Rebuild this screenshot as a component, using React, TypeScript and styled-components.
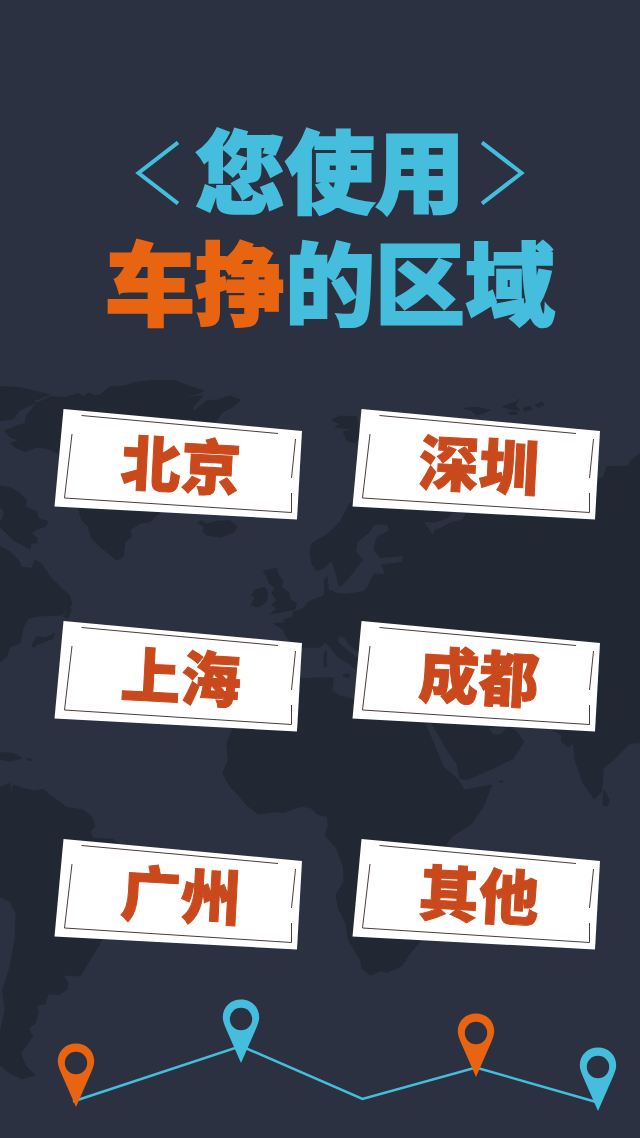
import React from 'react';
import styled, { createGlobalStyle } from 'styled-components';

const colors = {
  sea: '#2c3141',
  land: '#222833',
  sky: '#45bedd',
  orange: '#e96411',
  rust: '#ca491c',
};

const GlobalStyle = createGlobalStyle`
  *, *::before, *::after { box-sizing: border-box; }
  body {
    margin: 0;
    background: ${colors.sea};
    font-family: "Noto Sans CJK SC", "Noto Sans", sans-serif;
  }
`;

const Page = styled.main`
  position: relative;
  display: flex;
  flex-direction: column;
  min-height: 100vh;
  padding-top: 111px;
  overflow: hidden;
`;

const MapBackdrop = styled.svg`
  position: absolute;
  inset: 0;
  z-index: -1;
  width: 100%;
  height: auto;
`;

const Title = styled.h1`
  display: flex;
  flex-direction: column;
  margin: 0;
  padding-left: 20px;
  font-size: 90px;
  font-weight: 900;
  line-height: 112px;
  color: ${colors.sky};
`;

const TitleLine = styled.span`
  display: flex;
  justify-content: center;
  align-items: center;
  white-space: nowrap;
`;

const Words = styled.span<{ $accent?: boolean }>`
  display: block;
  color: ${({ $accent }) => ($accent ? colors.orange : colors.sky)};
  -webkit-text-stroke: 2px currentColor;
`;

const Chevron = styled.svg`
  width: 44px;
  height: 64px;
  margin: 12px 16px 0;
  fill: none;
  stroke: ${colors.sky};
  stroke-width: 4;
`;

const CityGrid = styled.nav`
  display: grid;
  grid-template-columns: 1fr 1fr;
  grid-template-rows: 212px 218px auto;
  column-gap: 50px;
  align-items: start;
  padding: 0 40px 0 54px;
  margin-top: 73px;
`;

const CityButton = styled.button`
  position: relative;
  display: flex;
  justify-content: center;
  align-items: center;
  height: 112px;
  padding: 0 0 4px 6px;
  border: 0;
  background: none;
  color: ${colors.rust};
  font-family: inherit;
  font-size: 60px;
  font-weight: 900;
  line-height: 64px;
  cursor: pointer;
`;

const Paper = styled.svg`
  position: absolute;
  inset: 0;
  width: 100%;
  height: 100%;
`;

const CityName = styled.span`
  position: relative;
  transform: rotate(3deg);
  -webkit-text-stroke: 1px currentColor;
`;

const Route = styled.svg`
  display: block;
  width: 100%;
  height: auto;
  margin-top: 40px;
`;

const cities = ['北京', '深圳', '上海', '成都', '广州', '其他'];

const pins = [
  { x: 76, y: 73, color: colors.orange },
  { x: 241, y: 29, color: colors.sky },
  { x: 476, y: 43, color: colors.orange },
  { x: 598, y: 77, color: colors.sky },
];

const landPaths = [
  // Arctic islands and Greenland
  'M0 80L60 82 100 92 148 104 120 116 96 122 110 128 60 150 40 176 0 182Z',
  'M80 165L110 130 150 110 200 112 235 100 250 111 265 98 285 108 300 104 330 80 375 78 400 68 450 62 525 62 550 72 575 80 612 93 585 104 555 109 500 110 560 112 608 108 575 145 585 152 620 122 650 120 690 108 722 120 700 140 665 158 655 175 630 200 500 400 480 458 450 485 420 490 390 510 395 530 375 545 370 590 350 600 325 580 300 560 275 535 265 500 245 480 235 445 175 280 140 265 110 262 75 275 45 262 32 250 60 240 30 232 14 212 50 198 75 190Z',
  // Iceland
  'M592 487L605 482 620 492 650 484 690 482 712 502 700 518 660 532 620 525 608 514 614 502Z',
  // North-east Canada
  'M0 378L30 382 60 400 80 420 75 440 110 455 115 475 145 485 135 500 110 508 95 520 112 535 110 550 92 548 90 568 40 540 0 500V486Q14 470 12 458T0 442Z',
  'M0 560L30 575 55 600 65 622 95 625 105 600 125 612 150 650 190 690 208 705 215 730 212 740 185 765 120 768 85 775 70 800 60 850 30 860 20 890 0 905Z',
  'M95 858L110 830 135 834 165 820 158 836 120 850 100 862Z',
  'M190 770L208 745 214 746 205 775Z',
  // Caribbean
  'M0 1178L40 1180 65 1195 30 1203 0 1198ZM82 1196L98 1198 95 1202 82 1200Z',
  // South America
  'M0 1282L30 1270 34 1305 40 1275 70 1285 100 1292 130 1288 150 1305 200 1342 250 1350 275 1370 285 1400 270 1415 280 1435 340 1438 400 1500 300 1750 270 1800 240 1848 190 1845 205 1870 200 1890 175 1904 145 1902 135 1932 110 1935 115 1960 105 1990 85 2005 98 2028 80 2055 62 2080 75 2115 105 2145 65 2157 30 2140 0 2115V2020L15 1950 8 1890 30 1820 45 1740 48 1660 30 1625 0 1610Z',
  // British Isles
  'M790 632L830 625 835 645 848 660 845 680 868 700 870 718 890 730 885 748 850 755 812 762 830 745 815 735 830 720 815 700 825 685 808 670 800 650Z',
  'M765 690L795 682 803 700 800 725 775 742 752 735 765 715 755 705Z',
  // Svalbard and the Siberian islands
  'M995 180L1020 168 1070 170 1080 230 1065 250 1040 240 1030 215 1060 208 1005 202 1018 192Z',
  'M1390 145L1430 142 1470 150 1450 160 1430 165 1415 152ZM1508 140L1550 125 1558 118 1545 138 1560 150 1530 148ZM1525 158L1548 154 1552 162 1530 164ZM1570 145L1590 138 1597 148 1575 153ZM1605 135L1625 126 1634 134 1615 142Z',
  // Europe, Asia and Africa
  'M1050 430L1020 485 980 525 935 550 930 575 935 610 950 632 970 625 996 602 1010 650 1018 682 1000 694 985 690 982 650 972 660 974 704 960 712 925 725 910 745 880 755 878 770 850 780 855 788 820 790 850 808 858 830 880 850 860 900 800 1000 700 1105 680 1150 685 1200 668 1240 690 1280 715 1305 740 1335 775 1362 825 1355 850 1358 905 1338 935 1345 950 1362 982 1370 985 1395 975 1425 1010 1465 1030 1520 1032 1565 1008 1605 1015 1645 1038 1690 1045 1740 1082 1800 1085 1825 1110 1845 1145 1832 1160 1838 1205 1818 1230 1780 1260 1745 1320 1640 1340 1450 1355 1430 1415 1390 1450 1340 1475 1275 1392 1290 1375 1260 1330 1220 1305 1160 1275 1090 1295 1090 1325 1140 1350 1185 1370 1210 1380 1255 1400 1260 1480 1225 1540 1195 1572 1145 1550 1115 1530 1105 1520 1080 1640 1080 1660 1112 1685 1125 1685 1145 1705 1162 1720 1150 1725 1200 1750 1270 1782 1317 1805 1295 1810 1225 1840 1200 1890 1150 1920 1148V282L1895 300 1885 318 1820 320 1810 355 1780 355 1400 300Z',
  'M1812 1290L1828 1320 1822 1338 1808 1336Z',
  'M1495 1265L1508 1262 1508 1268Z',
];

const seaPaths = [
  // Baltic
  'M1160 495L1125 495 1108 520 1075 545 1070 575 1090 600 1060 640 1030 675 1000 695 1040 700 1090 692 1100 680 1120 640 1152 640 1142 612 1205 604 1206 590 1140 596 1118 570 1128 530 1165 510Z',
  // White Sea
  'M1275 487L1305 490 1345 475 1360 455 1395 462 1385 478 1350 486 1325 500 1302 510 1298 522Z',
  // Mediterranean and Adriatic
  'M850 865H960L975 850 990 865 1010 890 1050 915 1064 930 1080 900 1050 875 1015 845 1018 830 1032 834 1045 855 1100 900V1020L1060 1015 1020 1005 998 990 1004 952 985 950 850 954Z',
  // Persian Gulf
  'M1468 1105L1515 1105 1505 1120 1480 1122Z',
];

const isletPaths = ['M972 878L980 870 982 920 972 924 970 900Z', 'M1028 942L1050 940 1048 956 1030 950Z'];

function WorldMap() {
  return (
    <MapBackdrop viewBox="0 0 640 1138" aria-hidden="true">
      <g transform="translate(0 360) scale(0.33333)">
        {landPaths.map((d) => (
          <path key={d} d={d} fill={colors.land} stroke={colors.land} strokeWidth="3" strokeLinejoin="round" />
        ))}
        {seaPaths.map((d) => (
          <path key={d} d={d} fill={colors.sea} stroke={colors.sea} strokeWidth="3" strokeLinejoin="round" />
        ))}
        {isletPaths.map((d) => (
          <path key={d} d={d} fill={colors.land} />
        ))}
      </g>
    </MapBackdrop>
  );
}

function City({ name }: { name: string }) {
  return (
    <CityButton type="button">
      <Paper viewBox="0 0 248 112" preserveAspectRatio="none" aria-hidden="true">
        <path d="M9.5 1L248 23 243 111.500 .5 98.500Z" fill="#fff" />
        <path
          d="M27.500 7.500L224 25.500M18 26L10.500 90 237.500 104.500V85M241.500 31L237.500 70"
          fill="none"
          stroke="#4a3c3a"
        />
      </Paper>
      <CityName>{name}</CityName>
    </CityButton>
  );
}

export default function App() {
  return (
    <>
      <GlobalStyle />
      <Page>
        <WorldMap />
        <Title>
          <TitleLine>
            <Chevron viewBox="0 0 44 64" aria-hidden="true">
              <path d="M43 1.500L3.500 32 43 62.500" />
            </Chevron>
            <Words>您使用</Words>
            <Chevron viewBox="0 0 44 64" aria-hidden="true">
              <path d="M1 1.500L40.500 32 1 62.500" />
            </Chevron>
          </TitleLine>
          <TitleLine>
            <Words $accent>车挣</Words>
            <Words>的区域</Words>
          </TitleLine>
        </Title>
        <CityGrid aria-label="区域">
          {cities.map((name) => (
            <City key={name} name={name} />
          ))}
        </CityGrid>
        <Route viewBox="0 0 640 148" aria-hidden="true">
          <path
            d="M73 111.500L241 56 362.500 109 476 77.500 598 112.500"
            fill="none"
            stroke={colors.sky}
            strokeWidth="2.500"
          />
          {pins.map(({ x, y, color }) => (
            <g key={x} transform={`translate(${x} ${y})`}>
              <path
                d="M0 44L-15.500 8.500C-17 4.500-18.200 1.500-18.200-1.500C-18.200-12.500-10-19.500 0-19.500S18.200-12.500 18.200-1.500C18.200 1.500 17 4.500 15.500 8.500Z"
                fill={color}
              />
              <circle r="11.200" fill={colors.sea} />
            </g>
          ))}
        </Route>
      </Page>
    </>
  );
}
